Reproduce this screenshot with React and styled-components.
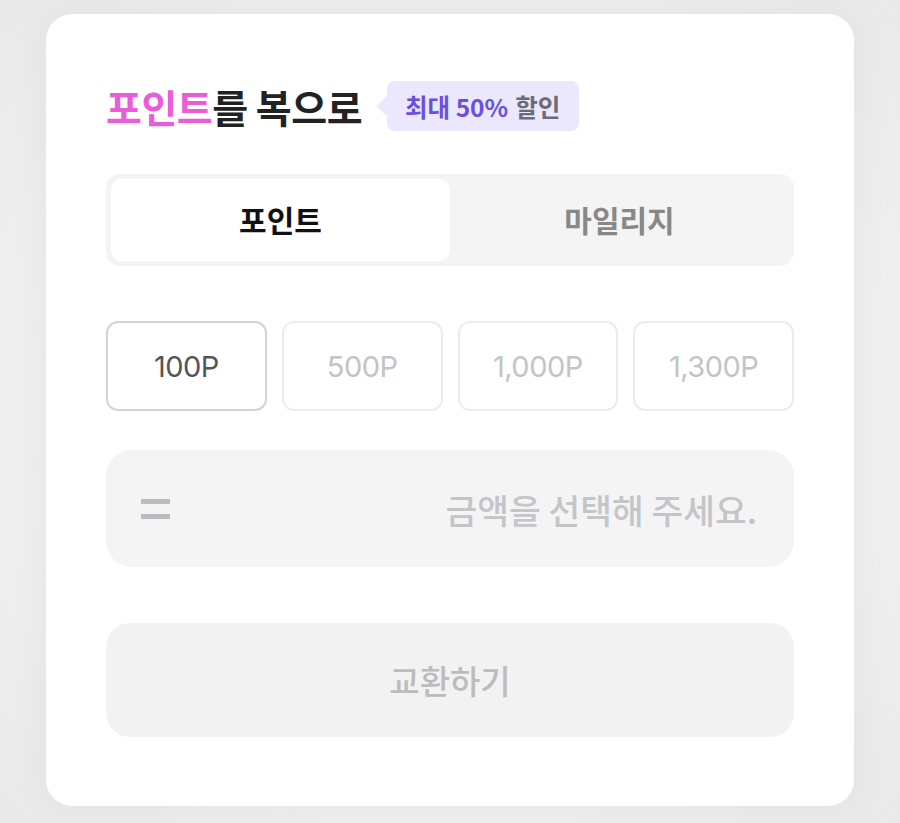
import styled, { createGlobalStyle } from "styled-components"
import { useState } from "react"

const amounts = ["100P", "500P", "1,000P", "1,300P"]

export default function App() {
  const [tab, setTab] = useState("point")
  const [selected, setSelected] = useState(0)

  return (
    <>
      <GlobalStyle />
      <Page>
        <Card>
          <TitleRow>
            <Title>
              <Accent>포인트</Accent>를 복으로
            </Title>
            <Badge>
              <strong>최대 50%</strong> 할인
            </Badge>
          </TitleRow>

          <Tabs>
            <Tab active={tab === "point"} onClick={() => setTab("point")}>포인트</Tab>
            <Tab active={tab === "mileage"} onClick={() => setTab("mileage")}>마일리지</Tab>
          </Tabs>

          <AmountGrid>
            {amounts.map((a, i) => (
              <AmountButton key={a} active={i === selected} onClick={() => setSelected(i)}>
                {a}
              </AmountButton>
            ))}
          </AmountGrid>

          <ResultBox>
            <Equals aria-label="=" />
            <Placeholder>금액을 선택해 주세요.</Placeholder>
          </ResultBox>

          <SubmitButton disabled>교환하기</SubmitButton>
        </Card>
      </Page>
    </>
  )
}

const GlobalStyle = createGlobalStyle`
  body {
    margin: 0;
    background: #ececec;
    font-family: Inter, "Noto Sans CJK KR", sans-serif;
  }
  button {
    font-family: inherit;
  }
`

const Page = styled.div`
  padding: 14px 46px 17px;
  min-height: 100vh;
  box-sizing: border-box;
  background: radial-gradient(ellipse at center, #f6f6f6 0%, #efefef 70%, #e9e9e9 100%);
`

const Card = styled.main`
  width: 808px;
  box-sizing: border-box;
  background: white;
  border-radius: 26px;
  padding: 66px 60px 69px;
  box-shadow: 0 0 40px rgba(0, 0, 0, 0.05);
  display: flex;
  flex-direction: column;
`

const TitleRow = styled.div`
  display: flex;
  align-items: center;
  gap: 25px;
  height: 52px;
`

const Title = styled.h1`
  margin: 0;
  font-family: "Noto Sans CJK KR", sans-serif;
  font-size: 39px;
  font-weight: 700;
  color: #222;
  letter-spacing: -0.5px;
`

const Accent = styled.span`
  color: #ea5dd8;
`

const Badge = styled.span`
  position: relative;
  display: inline-flex;
  align-items: center;
  gap: 7px;
  height: 50px;
  padding: 0 19px 0 18px;
  background: #ebe7fd;
  border-radius: 8px;
  font-family: "Noto Sans CJK KR", sans-serif;
  font-size: 24.5px;
  font-weight: 700;
  color: #6b6b78;
  strong {
    color: #6a4fe0;
    font-weight: 700;
  }
  &::before {
    content: "";
    position: absolute;
    left: -11px;
    top: 50%;
    transform: translateY(-50%);
    border-top: 11px solid transparent;
    border-bottom: 11px solid transparent;
    border-right: 12px solid #ebe7fd;
  }
`

const Tabs = styled.div`
  margin-top: 42px;
  display: grid;
  grid-template-columns: 1fr 1fr;
  padding: 5px;
  background: #f4f4f4;
  border-radius: 14px;
  height: 92px;
  box-sizing: border-box;
`

const Tab = styled.button`
  border: none;
  border-radius: 11px;
  background: ${(p) => (p.active ? "white" : "transparent")};
  color: ${(p) => (p.active ? "#111" : "#888")};
  font-family: "Noto Sans CJK KR", sans-serif;
  font-size: 30px;
  font-weight: 700;
  padding-bottom: 3px;
  cursor: pointer;
`

const AmountGrid = styled.div`
  margin-top: 55px;
  display: grid;
  grid-template-columns: repeat(4, 1fr);
  gap: 15px;
`

const AmountButton = styled.button`
  height: 90px;
  background: white;
  border: 2px solid ${(p) => (p.active ? "#d2d4d8" : "#ececec")};
  border-radius: 12px;
  font-size: 29px;
  font-weight: 400;
  letter-spacing: -0.5px;
  color: ${(p) => (p.active ? "#555" : "#c2c4c7")};
  cursor: pointer;
`

const ResultBox = styled.div`
  margin-top: 39px;
  height: 117px;
  background: #f4f4f4;
  border-radius: 26px;
  display: flex;
  align-items: center;
  justify-content: space-between;
  padding: 0 37px 0 35px;
`

const Equals = styled.span`
  width: 29px;
  height: 20px;
  box-sizing: border-box;
  border-top: 5px solid #b9bdc2;
  border-bottom: 5px solid #b9bdc2;
`

const Placeholder = styled.span`
  font-family: "Noto Sans CJK KR", sans-serif;
  font-size: 34.5px;
  font-weight: 500;
  color: #c3c5c8;
`

const SubmitButton = styled.button`
  margin-top: 56px;
  height: 114px;
  border: none;
  background: #f2f2f2;
  border-radius: 24px;
  font-family: "Noto Sans CJK KR", sans-serif;
  font-size: 33px;
  font-weight: 500;
  color: #bcbcbc;
`
